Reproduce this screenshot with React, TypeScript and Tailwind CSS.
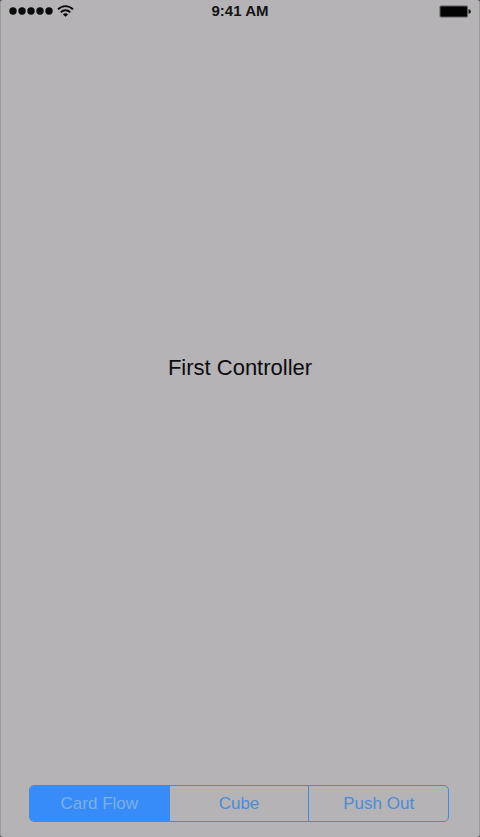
import { useState } from "react";

const transitions = ["Card Flow", "Cube", "Push Out"];

function Signal() {
  return (
    <div className="flex items-center gap-1" role="img" aria-label="Full signal, Wi-Fi connected">
      <svg width="44" height="8" viewBox="0 0 44 8" fill="#0b0b0c">
        {[4, 13, 22, 31, 40].map((cx) => (
          <circle key={cx} cx={cx} cy="4" r="3.700" />
        ))}
      </svg>
      <svg width="17" height="12" viewBox="0 0 17 12" fill="none" stroke="#0b0b0c" strokeWidth="1.9">
        <path d="M1 4.4C5.2 0 11.8 0 16 4.4" />
        <path d="M3.7 7.300c2.7-2.8 6.9-2.8 9.6 0" />
        <path d="M8.5 11.8 5.9 9.4c1.5-1.4 3.7-1.4 5.2 0z" fill="#0b0b0c" stroke="none" />
      </svg>
    </div>
  );
}

function Battery() {
  return (
    <svg width="32" height="13" viewBox="0 0 32 13" role="img" aria-label="Battery full">
      <rect x="0.5" y="0.5" width="28.5" height="12" rx="1.5" fill="#5e5d60" />
      <rect x="1.5" y="1.5" width="26.5" height="10" rx="0.8" fill="#030303" />
      <path d="M29.500 4.200c1.6.2 2.300 1 2.300 2.300s-.7 2.100-2.300 2.300z" fill="#111" />
    </svg>
  );
}

function StatusBar() {
  return (
    <header className="grid h-[22px] grid-cols-3 items-center px-2">
      <Signal />
      <span className="text-center text-[15px] leading-5 font-bold text-[#141415]">9:41 AM</span>
      <div className="flex justify-end">
        <Battery />
      </div>
    </header>
  );
}

export default function App() {
  const [selected, setSelected] = useState("Card Flow");

  return (
    <div className="min-h-screen bg-[#4b4a4d] font-['Liberation_Sans',Arial,sans-serif]">
      <div className="flex min-h-screen flex-col rounded-[3px] border-x border-[#9b9a9d] bg-[#b5b3b6]">
        <StatusBar />
        <main className="flex flex-1 items-center justify-center pb-[72px]">
          <h1 className="text-[22px] leading-7 text-[#0c0c0d]">First Controller</h1>
        </main>
        <div
          role="group"
          aria-label="Transition"
          className="mr-[30px] mb-[15px] ml-7 flex h-[37px] divide-x divide-[#428bdc] overflow-hidden rounded-[5px] border border-[#428bdc]"
        >
          {transitions.map((name) => (
            <button
              key={name}
              type="button"
              aria-pressed={selected === name}
              onClick={() => setSelected(name)}
              className={
                selected === name
                  ? "flex-1 bg-[#388cfa] text-[17px] leading-5 text-[#7fafe6]"
                  : "flex-1 text-[17px] leading-5 text-[#4b8cd5]"
              }
            >
              {name}
            </button>
          ))}
        </div>
      </div>
    </div>
  );
}
